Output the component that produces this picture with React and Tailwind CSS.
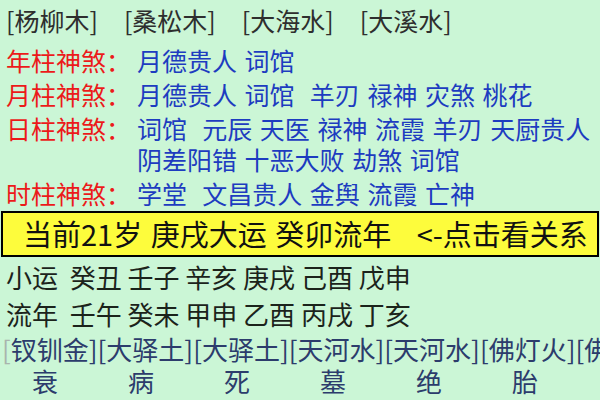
import React from "react";

const nayinTop = ["[杨柳木]", "[桑松木]", "[大海水]", "[大溪水]"];

const shensha = [
  { label: "年柱神煞：", lines: ["月德贵人 词馆"] },
  { label: "月柱神煞：", lines: ["月德贵人 词馆  羊刃 禄神 灾煞 桃花"] },
  { label: "日柱神煞：", lines: ["词馆  元辰 天医 禄神 流霞 羊刃 天厨贵人", "阴差阳错 十恶大败 劫煞 词馆"] },
  { label: "时柱神煞：", lines: ["学堂  文昌贵人 金舆 流霞 亡神"] },
];

const nayin = ["钗钏金]", "[大驿土]", "[大驿土]", "[天河水]", "[天河水]", "[佛灯火]", "[佛灯火]"];
const changsheng = ["衰", "病", "死", "墓", "绝", "胎"];
const shishen = ["正印", "七杀", "正官", "偏财", "正财", "食神"];

export default function App() {
  return (
    <div
      className="w-[600px] h-[400px] overflow-hidden bg-[#cbf6d6] text-[25px]"
      style={{ fontFamily: '"Noto Sans CJK SC", "Noto Sans", sans-serif' }}
    >
      {/* 纳音 */}
      <div className="flex gap-[26px] pl-[6px] pt-[5px] leading-[31px] text-[#2e2e2e] whitespace-nowrap">
        {nayinTop.map((n, i) => (
          <span key={i}>{n}</span>
        ))}
      </div>

      {/* 神煞 */}
      <div className="mt-[9px] pl-[6px]">
        {shensha.map((row, i) => (
          <div key={i} className="flex leading-[31px] mb-[3px]">
            <div className="w-[131px] shrink-0 text-[#ec1a1a]">{row.label}</div>
            <div className="text-[#1d3cc0] whitespace-pre [word-spacing:2px]">
              {row.lines.map((l, j) => (
                <div key={j}>{l}</div>
              ))}
            </div>
          </div>
        ))}
      </div>

      {/* 大运流年 */}
      <div className="h-[46px] mt-[-1px] mx-[1px] border-2 border-black bg-[#fdfc3c] flex items-center pl-[20px] text-[29px] text-[#111] whitespace-pre [word-spacing:2px]">
        当前21岁 庚戌大运 癸卯流年   {"<"}-点击看关系
      </div>

      {/* 小运 流年 */}
      <div className="pl-[6px] text-[26px] text-[#1b231b] whitespace-pre">
        <div className="leading-[36px] mt-[2px]">小运  癸丑 壬子 辛亥 庚戌 己酉 戊申</div>
        <div className="leading-[37px]">流年  壬午 癸未 甲申 乙酉 丙戌 丁亥</div>
      </div>

      {/* 纳音 / 长生 / 十神 */}
      <div className="text-[26px] text-[#2c3c6c] whitespace-nowrap">
        <div className="pl-[2px] leading-[33px]">
          <span className="text-[#a9b4ad]">[</span>
          {nayin.join("")}
        </div>
        <div className="flex ml-[-3px] leading-[31px]">
          {changsheng.map((n, i) => (
            <span key={i} className="w-[96px] shrink-0 text-center">
              {n}
            </span>
          ))}
        </div>
        <div className="flex ml-[-3px] leading-[31px]">
          {shishen.map((n, i) => (
            <span key={i} className="w-[96px] shrink-0 text-center">
              {n}
            </span>
          ))}
        </div>
      </div>
    </div>
  );
}
